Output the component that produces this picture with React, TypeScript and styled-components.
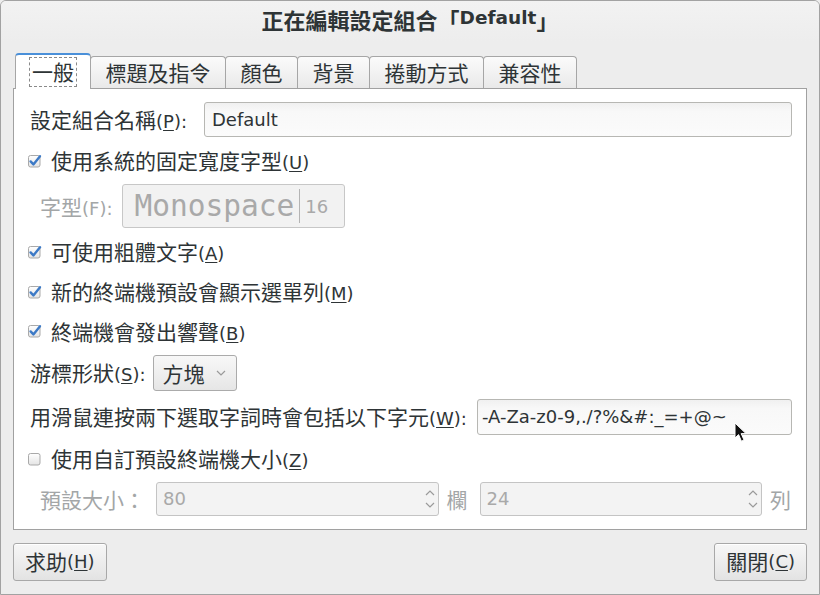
import React from 'react';
import styled, { createGlobalStyle } from 'styled-components';

const GlobalStyle = createGlobalStyle`
  html, body { margin: 0; padding: 0; background: #ededed; }
  body {
    font-family: "Noto Sans CJK TC", "DejaVu Sans", sans-serif;
    font-size: 21px;
    color: #2e3436;
  }
  * { box-sizing: border-box; }
`;

const Check = ({ on }: { on?: boolean }) => (
  <svg width="14" height="14" viewBox="0 0 14 14">
    <defs>
      <linearGradient id="cb" x1="0" y1="0" x2="0" y2="1">
        <stop offset="0" stopColor="#ffffff" />
        <stop offset="1" stopColor="#e4e4e4" />
      </linearGradient>
    </defs>
    <rect x="0.5" y="1.5" width="11.5" height="11.5" rx="2" fill="url(#cb)" stroke="#a9a9a9" />
    {on && (
      <path d="M2.6 7.4 L5.4 10.4 L12 2.2" fill="none" stroke="#3d7ac6" strokeWidth="2.4" strokeLinecap="round" strokeLinejoin="round" />
    )}
  </svg>
);

const Chevron = ({ up }: { up?: boolean }) => (
  <svg width="10" height="6" viewBox="0 0 10 6">
    <path d={up ? 'M1 5 L5 1 L9 5' : 'M1 1 L5 5 L9 1'} fill="none" stroke="#9a9a9a" strokeWidth="1.2" />
  </svg>
);

const Pointer = () => (
  <svg width="16" height="22" viewBox="0 0 16 22">
    <path d="M1 1 L1 16 L4.6 12.6 L7.4 19.2 L10 18 L7.2 11.6 L12 11.6 Z" fill="#111" stroke="#fff" strokeWidth="1" strokeLinejoin="round" />
  </svg>
);

export default function App() {
  return (
    <>
      <GlobalStyle />
      <Window>
        <TitleBar>
          正在編輯設定組合「<TitleLatin>Default</TitleLatin>」
        </TitleBar>
        <Body>
          <TabStrip>
            <Tab $active>
              <Focus>一般</Focus>
            </Tab>
            <Tab>標題及指令</Tab>
            <Tab>顏色</Tab>
            <Tab>背景</Tab>
            <Tab>捲動方式</Tab>
            <Tab>兼容性</Tab>
          </TabStrip>
          <Panel>
            <Row $gap={17} $h={35}>
              <span>
                設定組合名稱<Mn>(<U>P</U>):</Mn>
              </span>
              <Entry>Default</Entry>
            </Row>
            <CheckRow>
              <Check on />
              <span>
                使用系統的固定寬度字型<Mn>(<U>U</U>)</Mn>
              </span>
            </CheckRow>
            <Row $gap={10} $h={44} $indent={10} $dim>
              <span>
                字型<Mn>(F):</Mn>
              </span>
              <FontButton>
                <MonoText>Monospace</MonoText>
                <Sep />
                <SizeText>16</SizeText>
              </FontButton>
            </Row>
            <CheckRow>
              <Check on />
              <span>
                可使用粗體文字<Mn>(<U>A</U>)</Mn>
              </span>
            </CheckRow>
            <CheckRow>
              <Check on />
              <span>
                新的終端機預設會顯示選單列<Mn>(<U>M</U>)</Mn>
              </span>
            </CheckRow>
            <CheckRow>
              <Check on />
              <span>
                終端機會發出響聲<Mn>(<U>B</U>)</Mn>
              </span>
            </CheckRow>
            <Row $gap={7} $h={36}>
              <span>
                游標形狀<Mn>(<U>S</U>):</Mn>
              </span>
              <Combo>
                方塊
                <ComboArrow>
                  <Chevron />
                </ComboArrow>
              </Combo>
            </Row>
            <Row $gap={10} $h={36}>
              <span>
                用滑鼠連按兩下選取字詞時會包括以下字元<Mn>(<U>W</U>):</Mn>
              </span>
              <Entry $tight>-A-Za-z0-9,./?%&amp;#:_=+@~</Entry>
            </Row>
            <CheckRow>
              <Check />
              <span>
                使用自訂預設終端機大小<Mn>(<U>Z</U>)</Mn>
              </span>
            </CheckRow>
            <Row $gap={11} $h={34} $indent={10} $dim>
              <span>預設大小：</span>
              <Spin $w={284}>
                80
                <SpinArrows>
                  <Chevron up />
                  <Chevron />
                </SpinArrows>
              </Spin>
              <Unit>欄</Unit>
              <Spin $w={284}>
                24
                <SpinArrows>
                  <Chevron up />
                  <Chevron />
                </SpinArrows>
              </Spin>
              <Unit>列</Unit>
            </Row>
          </Panel>
          <Footer>
            <Button>
              求助<Mn>(<U>H</U>)</Mn>
            </Button>
            <Button>
              關閉<Mn>(<U>C</U>)</Mn>
            </Button>
          </Footer>
        </Body>
        <Cursor>
          <Pointer />
        </Cursor>
      </Window>
    </>
  );
}

const Window = styled.div`
  position: relative;
  width: 820px;
  height: 595px;
  border: 1px solid #a2a2a2;
  border-radius: 6px 6px 0 0;
  background: #ededed;
  display: flex;
  flex-direction: column;
  overflow: hidden;
`;

const TitleBar = styled.div`
  height: 41px;
  flex: none;
  display: flex;
  align-items: center;
  justify-content: center;
  padding-bottom: 6px;
  font-size: 22px;
  font-weight: bold;
  line-height: 1;
  color: #2e3436;
  background: linear-gradient(#f2f2f2, #ededed);
`;

const TitleLatin = styled.span`
  font-family: "DejaVu Sans", sans-serif;
  font-size: 18.5px;
`;

const Body = styled.div`
  flex: 1;
  display: flex;
  flex-direction: column;
  padding: 11px 12px 0 12px;
`;

const TabStrip = styled.div`
  display: flex;
  align-items: flex-end;
  height: 35px;
  padding-left: 3px;
`;

const Tab = styled.div<{ $active?: boolean }>`
  position: relative;
  height: ${(p) => (p.$active ? 36 : 32)}px;
  margin-left: -1px;
  padding: 0 ${(p) => (p.$active ? 13 : 14.5)}px;
  display: flex;
  align-items: center;
  line-height: 1.2;
  border: 1px solid #a6a6a6;
  border-bottom: none;
  border-radius: 4px 4px 0 0;
  background: ${(p) => (p.$active ? '#ffffff' : 'linear-gradient(#fbfbfb, #e9e9e9)')};
  ${(p) =>
    p.$active &&
    `
    border-top: 2px solid #4a90d9;
    align-self: flex-start;
    margin-bottom: -1px;
    z-index: 1;
  `}
`;

const Focus = styled.span`
  border: 1px dashed #8a8a8a;
  padding: 1px 2px;
`;

const Panel = styled.div`
  height: 442px;
  flex: none;
  display: flex;
  flex-direction: column;
  gap: 7.7px;
  padding: 13px 14px 0 16px;
  background: #ffffff;
  border: 1px solid #a1a1a1;
`;

const Row = styled.div<{ $gap?: number; $h?: number; $indent?: number; $dim?: boolean }>`
  display: flex;
  align-items: center;
  gap: ${(p) => p.$gap ?? 12}px;
  height: ${(p) => p.$h ?? 32}px;
  padding-left: ${(p) => p.$indent ?? 0}px;
  line-height: 1.2;
  white-space: nowrap;
  color: ${(p) => (p.$dim ? '#a3a6a7' : '#2e3436')};
`;

const CheckRow = styled.div`
  display: flex;
  align-items: center;
  gap: 9px;
  height: 32px;
  margin-left: -2px;
  line-height: 1.2;
  white-space: nowrap;
`;

const Mn = styled.span`
  font-family: "DejaVu Sans", sans-serif;
  font-size: 18px;
`;

const U = styled.u`
  text-underline-offset: 2px;
`;

const Entry = styled.div<{ $tight?: boolean }>`
  flex: 1;
  height: 100%;
  display: flex;
  align-items: center;
  padding-left: ${(p) => (p.$tight ? 4 : 7)}px;
  font-family: "DejaVu Sans", sans-serif;
  font-size: 18px;
  color: #2e3436;
  border: 1px solid #b7b7b3;
  border-radius: 3px;
  background: linear-gradient(#f0f0f0, #f8f8f8 25%, #fbfbfb);
`;

const FontButton = styled.div`
  width: 223px;
  height: 44px;
  display: flex;
  align-items: center;
  padding: 0 11px;
  border: 1px solid #c7c7c7;
  border-radius: 3px;
  background: #f2f2f2;
  color: #a9a9a9;
`;

const MonoText = styled.span`
  font-family: "DejaVu Sans Mono", monospace;
  font-size: 29.5px;
  line-height: 1;
`;

const Sep = styled.span`
  width: 1px;
  height: 34px;
  margin: 0 5px 0 5px;
  background: #b4b4b4;
`;

const SizeText = styled.span`
  font-family: "DejaVu Sans", sans-serif;
  font-size: 18px;
`;

const Combo = styled.div`
  width: 84px;
  height: 36px;
  display: flex;
  align-items: center;
  padding-left: 9px;
  border: 1px solid #ababab;
  border-radius: 3px;
  background: linear-gradient(#f8f8f8, #e6e6e6);
`;

const ComboArrow = styled.span`
  display: flex;
  margin-left: auto;
  margin-right: 10px;
`;

const Spin = styled.div<{ $w: number }>`
  width: ${(p) => p.$w}px;
  height: 34px;
  display: flex;
  align-items: center;
  padding-left: 6px;
  font-family: "DejaVu Sans", sans-serif;
  font-size: 18px;
  color: #a9a9a9;
  border: 1px solid #c4c4c4;
  border-radius: 3px;
  background: #f3f3f3;
`;

const SpinArrows = styled.span`
  display: flex;
  flex-direction: column;
  gap: 6px;
  margin-left: auto;
  margin-right: 3px;
`;

const Unit = styled.span`
  margin: 0 1px 0 -3px;
`;

const Footer = styled.div`
  display: flex;
  justify-content: space-between;
  padding-top: 13px;
`;

const Button = styled.div`
  height: 38px;
  display: flex;
  align-items: center;
  padding: 0 11px;
  line-height: 1.2;
  border: 1px solid #a8a8a8;
  border-radius: 3px;
  background: linear-gradient(#f7f7f7, #e3e3e3);
  box-shadow: inset 0 1px #ffffff;
`;

const Cursor = styled.div`
  position: absolute;
  left: 733px;
  top: 421px;
  display: flex;
`;
